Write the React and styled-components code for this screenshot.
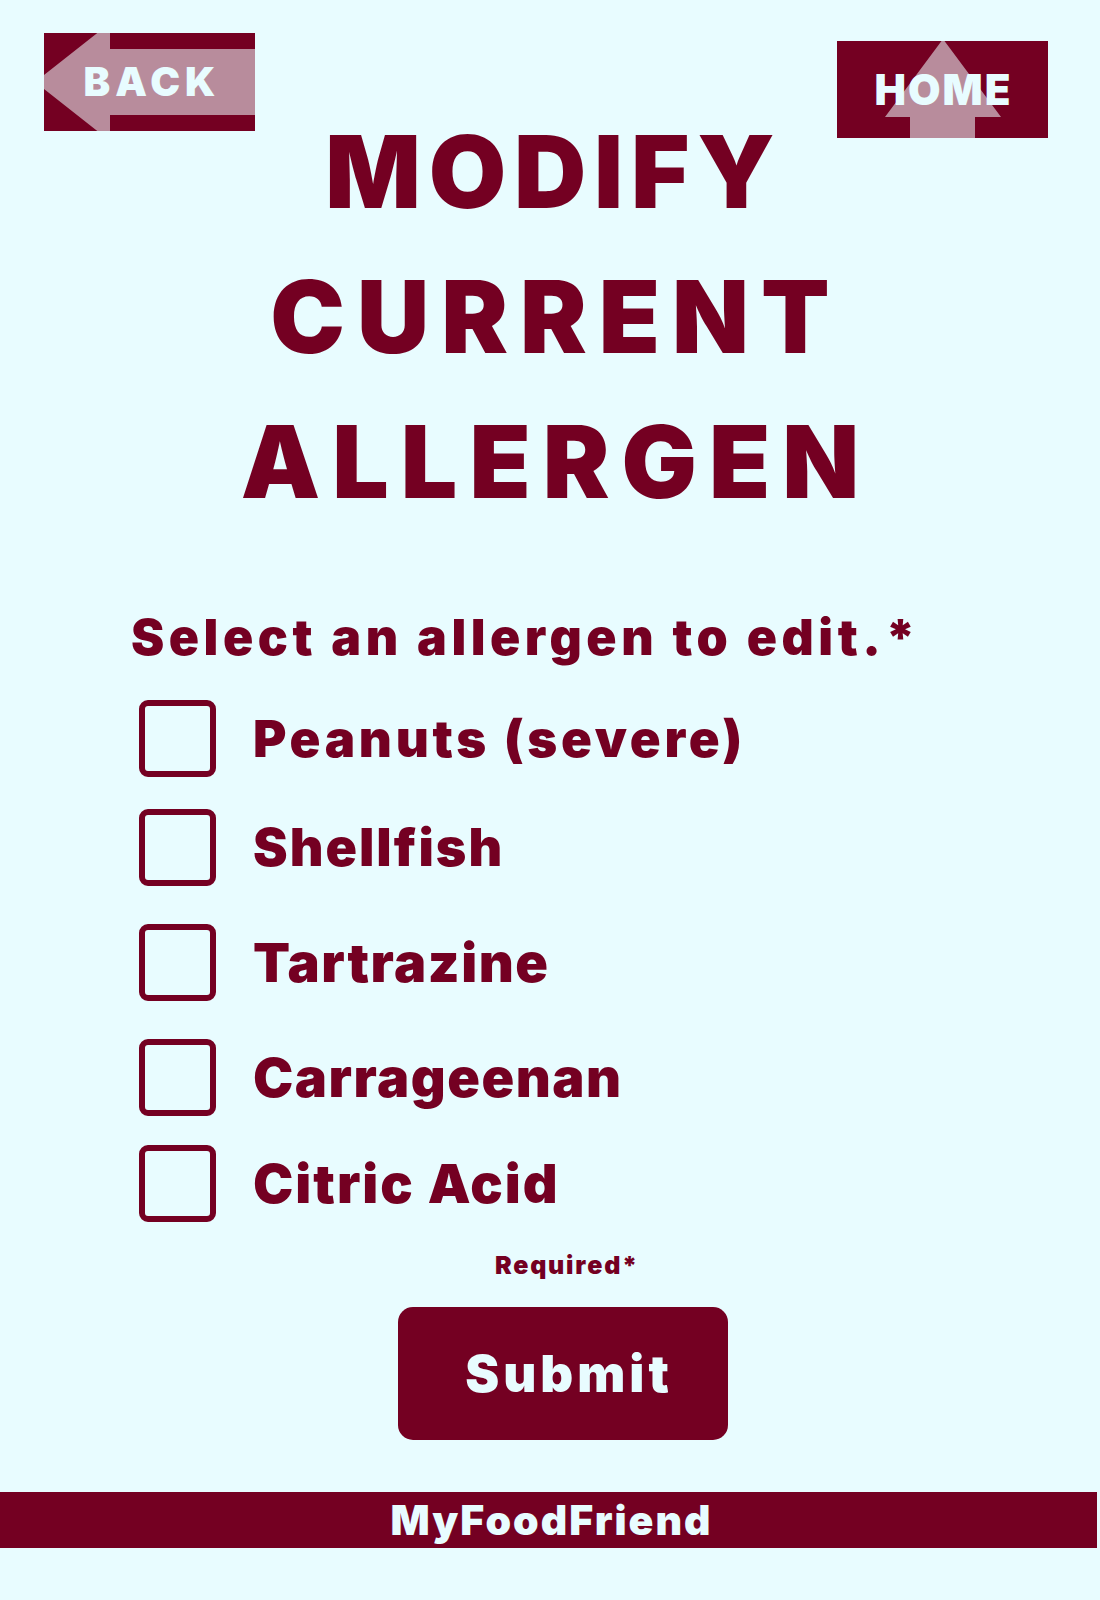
import React from 'react';
import styled, { createGlobalStyle } from 'styled-components';

const maroon = '#740022';
const ice = '#e8fcff';
const rose = '#b88c9c';

const GlobalStyle = createGlobalStyle`
  html, body {
    margin: 0;
    padding: 0;
    background: ${ice};
  }
  * {
    box-sizing: border-box;
  }
`;

const Page = styled.div`
  width: 1100px;
  min-height: 1600px;
  background: ${ice};
  color: ${maroon};
  font-family: Inter, 'Noto Sans', sans-serif;
  font-weight: 900;
  display: flex;
  flex-direction: column;
`;

const TopBar = styled.div`
  height: 99px;
  padding: 33px 52px 0 44px;
  display: flex;
  justify-content: space-between;
  align-items: flex-start;
`;

const NavButton = styled.button`
  position: relative;
  width: 211px;
  height: ${(p) => p.$h}px;
  margin-top: ${(p) => p.$offset || 0}px;
  border: none;
  padding: 0 0 0 ${(p) => p.$spacing}px;
  background: ${maroon};
  color: ${ice};
  font-family: inherit;
  font-weight: 900;
  font-size: ${(p) => p.$size}px;
  letter-spacing: ${(p) => p.$spacing}px;
  display: flex;
  align-items: center;
  justify-content: center;
  cursor: pointer;
  overflow: hidden;
  z-index: 1;
`;

const ArrowArt = styled.svg`
  position: absolute;
  inset: 0;
  width: 100%;
  height: 100%;
`;

const NavLabel = styled.span`
  position: relative;
  line-height: 1;
`;

const Title = styled.h1`
  margin: 0;
  font-size: 100px;
  line-height: 145px;
  font-weight: 900;
  text-align: center;
`;

const TitleLine = styled.span`
  display: block;
  letter-spacing: ${(p) => p.$spacing}px;
  padding-left: ${(p) => p.$spacing}px;
`;

const Form = styled.form`
  margin-top: 73px;
  display: flex;
  flex-direction: column;
`;

const Prompt = styled.div`
  padding-left: 131px;
  font-size: 50px;
  line-height: 60px;
  letter-spacing: 4.5px;
`;

const OptionList = styled.div`
  margin-top: 33px;
  padding-left: 139px;
  display: flex;
  flex-direction: column;
`;

const OptionRow = styled.label`
  display: flex;
  align-items: center;
  gap: 37px;
  margin-top: ${(p) => p.$top || 0}px;
  cursor: pointer;
`;

const Box = styled.input`
  appearance: none;
  margin: 0;
  width: 77px;
  height: 77px;
  border: 6px solid ${maroon};
  border-radius: 9px;
  background: transparent;
  flex-shrink: 0;
  cursor: pointer;
  &:checked {
    background: ${maroon};
  }
`;

const OptionText = styled.span`
  font-size: ${(p) => p.$size || 54}px;
  line-height: 1;
  letter-spacing: ${(p) => p.$spacing || 1.5}px;
`;

const SubmitArea = styled.div`
  margin-top: 28px;
  padding-left: 26px;
  display: flex;
  flex-direction: column;
  align-items: center;
`;

const Required = styled.div`
  font-size: 25px;
  line-height: 30px;
  letter-spacing: 1.8px;
  padding-left: 8px;
`;

const SubmitButton = styled.button`
  margin-top: 27px;
  width: 330px;
  height: 133px;
  border: none;
  border-radius: 15px;
  padding: 0 0 0 12px;
  background: ${maroon};
  color: ${ice};
  font-family: inherit;
  font-weight: 900;
  font-size: 51px;
  letter-spacing: 4px;
  cursor: pointer;
`;

const Footer = styled.footer`
  margin-top: 52px;
  margin-right: 3px;
  height: 56px;
  background: ${maroon};
  color: ${ice};
  font-size: 41px;
  letter-spacing: 2px;
  padding-left: 6px;
  display: flex;
  align-items: center;
  justify-content: center;
`;

const allergens = [
  { name: 'Peanuts (severe)', size: 51, spacing: 3.7, top: 0 },
  { name: 'Shellfish', size: 52, spacing: 2, top: 32 },
  { name: 'Tartrazine', top: 38 },
  { name: 'Carrageenan', top: 38 },
  { name: 'Citric Acid', spacing: 2, top: 29 },
];

const App = () => (
  <>
    <GlobalStyle />
    <Page>
      <TopBar>
        <NavButton type="button" $h={98} $size={40} $spacing={5}>
          <ArrowArt viewBox="0 0 211 98" preserveAspectRatio="none">
            <polygon points="-9,49 66,-10 66,16 211,16 211,82 66,82 66,108" fill={rose} />
          </ArrowArt>
          <NavLabel>BACK</NavLabel>
        </NavButton>
        <NavButton type="button" $h={97} $offset={8} $size={42} $spacing={2}>
          <ArrowArt viewBox="0 0 211 97" preserveAspectRatio="none">
            <polygon points="106,-2 164,76 138,76 138,97 73,97 73,76 48,76" fill={rose} />
          </ArrowArt>
          <NavLabel>HOME</NavLabel>
        </NavButton>
      </TopBar>

      <Title>
        <TitleLine $spacing={7.8}>MODIFY</TitleLine>
        <TitleLine $spacing={12}>CURRENT</TitleLine>
        <TitleLine $spacing={12}>ALLERGEN</TitleLine>
      </Title>

      <Form onSubmit={(e) => e.preventDefault()}>
        <Prompt>Select an allergen to edit.*</Prompt>
        <OptionList>
          {allergens.map((a) => (
            <OptionRow key={a.name} $top={a.top}>
              <Box type="checkbox" name="allergen" />
              <OptionText $size={a.size} $spacing={a.spacing}>
                {a.name}
              </OptionText>
            </OptionRow>
          ))}
        </OptionList>
        <SubmitArea>
          <Required>Required*</Required>
          <SubmitButton type="submit">Submit</SubmitButton>
        </SubmitArea>
      </Form>

      <Footer>MyFoodFriend</Footer>
    </Page>
  </>
);

export default App;
